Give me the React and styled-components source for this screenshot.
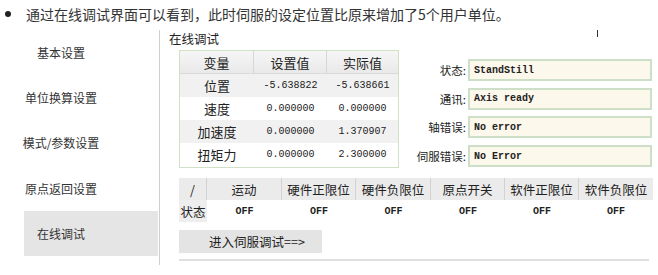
import React from 'react';
import styled, { createGlobalStyle } from 'styled-components';

const GlobalStyle = createGlobalStyle`
  html, body {
    margin: 0;
    padding: 0;
    background: #fff;
  }
  body {
    font-family: "Noto Sans CJK SC", "Noto Sans", sans-serif;
    color: #222;
  }
`;

const Page = styled.div`
  position: relative;
  width: 658px;
  height: 275px;
  overflow: hidden;
`;

const Intro = styled.div`
  display: flex;
  align-items: center;
  height: 28px;
  padding-left: 5px;
  font-size: 14px;
  color: #333;
`;

const Bullet = styled.span`
  width: 6px;
  height: 6px;
  border-radius: 50%;
  background: #222;
  margin-right: 15px;
`;

const Cursor = styled.span`
  position: absolute;
  left: 597px;
  top: 30px;
  width: 1px;
  height: 7px;
  background: #333;
`;

const Main = styled.div`
  display: flex;
  margin-top: 2px;
`;

const Sidebar = styled.div`
  width: 159px;
  height: 235px;
  border-right: 1px solid #cfcfcf;
`;

const NavItem = styled.div`
  display: flex;
  align-items: center;
  justify-content: center;
  height: 45.2px;
  margin-left: 24px;
  width: 134px;
  padding-right: 60px;
  box-sizing: border-box;
  font-size: 12px;
  color: #333;
  white-space: nowrap;
  background: ${p => (p.$active ? '#e5e5e5' : 'transparent')};
`;

const Content = styled.div`
  flex: 1;
  display: flex;
  flex-direction: column;
`;

const Title = styled.div`
  height: 18px;
  line-height: 18px;
  margin-left: 9px;
  font-size: 12.5px;
  color: #222;
`;

const TopArea = styled.div`
  display: flex;
  margin-top: 2px;
  padding-left: 19px;
`;

const VarTable = styled.div`
  width: 220px;
  height: 118px;
  box-sizing: border-box;
  border: 1px solid #cfe2c8;
  display: grid;
  grid-template-columns: 74px 73px 71px;
  grid-auto-rows: 23px;
`;

const HeadCell = styled.div`
  display: flex;
  align-items: center;
  justify-content: center;
  font-size: 13px;
  color: #222;
  background: linear-gradient(#f6f6f6, #e9e9e9);
  border-right: ${p => (p.$last ? 'none' : '1px solid #d6d6d6')};
  border-bottom: 1px solid #dadada;
`;

const Cell = styled.div`
  display: flex;
  align-items: center;
  justify-content: center;
  background: ${p => (p.$shade ? '#f1f1f1' : '#fff')};
  font-size: ${p => (p.$num ? '10px' : '13px')};
  font-family: ${p => (p.$num ? '"Liberation Mono", monospace' : 'inherit')};
  color: #222;
`;

const StatusPanel = styled.div`
  flex: 1;
  display: flex;
  flex-direction: column;
  gap: 6.7px;
  padding-top: 9px;
  padding-right: 6px;
`;

const Field = styled.div`
  display: flex;
  align-items: center;
  justify-content: flex-end;
  font-size: 11.5px;
  color: #222;
`;

const FieldLabel = styled.span`
  margin-right: 2px;
  white-space: nowrap;
`;

const FieldBox = styled.div`
  width: 184px;
  height: 22px;
  box-sizing: border-box;
  border: 2px solid #cddfc6;
  background: #fdf8ec;
  padding-left: 4px;
  display: flex;
  align-items: center;
  font-family: "Liberation Mono", monospace;
  font-size: 10px;
  font-weight: bold;
  color: #222;
`;

const IoTable = styled.div`
  margin-top: 10px;
  margin-left: 19px;
  width: 474px;
  display: grid;
  grid-template-columns: 28px 75px 74px 75px 74px 74px 74px;
  grid-auto-rows: 22px;
`;

const IoHead = styled.div`
  display: flex;
  align-items: center;
  justify-content: center;
  background: #ebebeb;
  border-right: ${p => (p.$last ? 'none' : '1px solid #d2d2d2')};
  font-size: 12.5px;
  color: #222;
`;

const IoCell = styled.div`
  display: flex;
  align-items: center;
  justify-content: center;
  background: ${p => (p.$label ? '#eeeeee' : '#fff')};
  font-size: ${p => (p.$label ? '12.5px' : '10px')};
  font-family: ${p => (p.$label ? 'inherit' : '"Liberation Mono", monospace')};
  font-weight: ${p => (p.$label ? 'normal' : 'bold')};
  color: #222;
`;

const ServoButton = styled.div`
  margin-top: 8px;
  margin-left: 19px;
  width: 143px;
  height: 23px;
  background: #e4e4e4;
  display: flex;
  align-items: center;
  padding-left: 30px;
  box-sizing: border-box;
  font-size: 12.5px;
  color: #222;
`;

const Rule = styled.div`
  margin-top: 6px;
  margin-left: 19px;
  width: 470px;
  height: 2px;
  background: #e0e0e0;
`;

const navItems = ['基本设置', '单位换算设置', '模式/参数设置', '原点返回设置', '在线调试'];

const vars = [
  ['位置', '-5.638822', '-5.638661'],
  ['速度', '0.000000', '0.000000'],
  ['加速度', '0.000000', '1.370907'],
  ['扭矩力', '0.000000', '2.300000'],
];

const fields = [
  ['状态', 'StandStill'],
  ['通讯', 'Axis ready'],
  ['轴错误', 'No error'],
  ['伺服错误', 'No Error'],
];

const ioHeads = ['/', '运动', '硬件正限位', '硬件负限位', '原点开关', '软件正限位', '软件负限位'];

export default function App() {
  return (
    <Page>
      <GlobalStyle />
      <Intro>
        <Bullet />
        通过在线调试界面可以看到，此时伺服的设定位置比原来增加了5个用户单位。
      </Intro>
      <Cursor />
      <Main>
        <Sidebar>
          {navItems.map((n, i) => (
            <NavItem key={n} $active={i === navItems.length - 1}>{n}</NavItem>
          ))}
        </Sidebar>
        <Content>
          <Title>在线调试</Title>
          <TopArea>
            <VarTable>
              <HeadCell>变量</HeadCell>
              <HeadCell>设置值</HeadCell>
              <HeadCell $last>实际值</HeadCell>
              {vars.map((row, i) => (
                <React.Fragment key={row[0]}>
                  <Cell $shade={i % 2 === 0}>{row[0]}</Cell>
                  <Cell $shade={i % 2 === 0} $num>{row[1]}</Cell>
                  <Cell $shade={i % 2 === 0} $num>{row[2]}</Cell>
                </React.Fragment>
              ))}
            </VarTable>
            <StatusPanel>
              {fields.map(([label, value]) => (
                <Field key={label}>
                  <FieldLabel>{label}:</FieldLabel>
                  <FieldBox>{value}</FieldBox>
                </Field>
              ))}
            </StatusPanel>
          </TopArea>
          <IoTable>
            {ioHeads.map((h, i) => (
              <IoHead key={h} $last={i === ioHeads.length - 1}>{h}</IoHead>
            ))}
            <IoCell $label>状态</IoCell>
            {ioHeads.slice(1).map(h => (
              <IoCell key={h}>OFF</IoCell>
            ))}
          </IoTable>
          <ServoButton>进入伺服调试==&gt;</ServoButton>
          <Rule />
        </Content>
      </Main>
    </Page>
  );
}
